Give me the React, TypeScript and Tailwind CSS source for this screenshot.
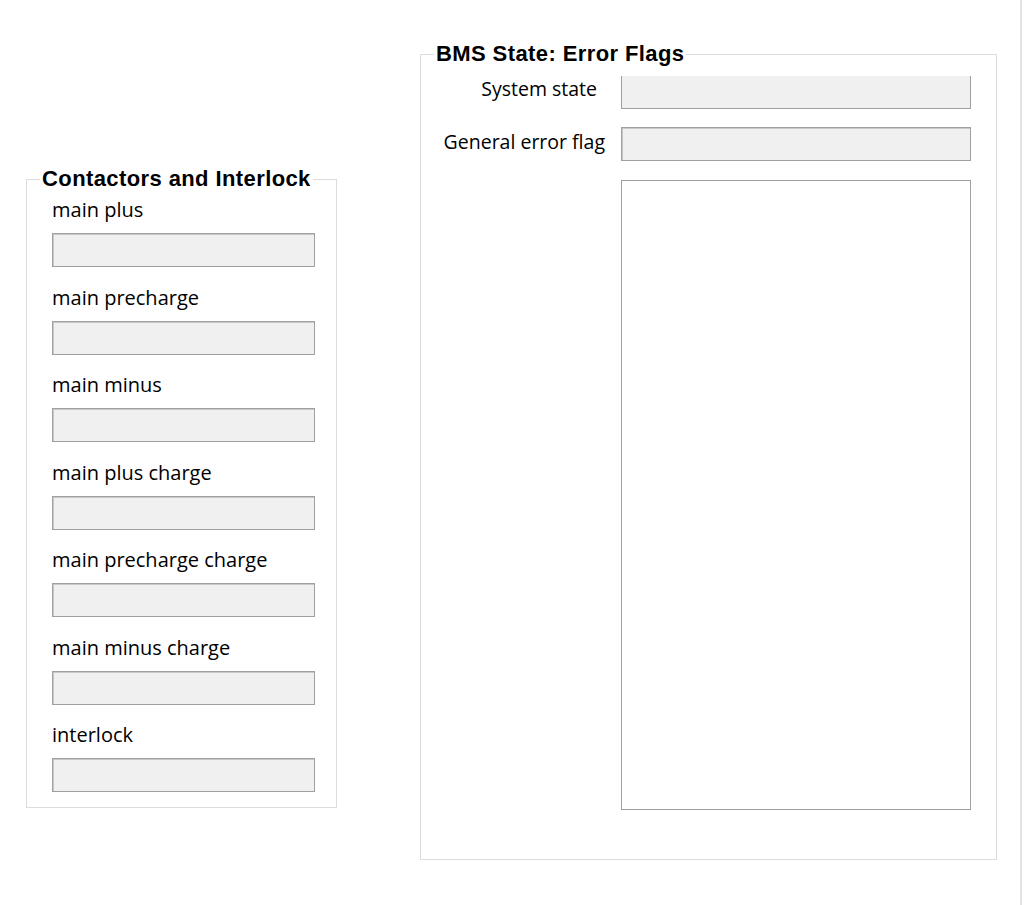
import React from "react";

const CONTACTORS = [
  "main plus",
  "main precharge",
  "main minus",
  "main plus charge",
  "main precharge charge",
  "main minus charge",
  "interlock",
];

const ReadOnlyBox: React.FC<{ className?: string }> = ({ className }) => (
  <div
    className={`border border-[#a0a0a0] bg-[#f0f0f0] shadow-[inset_1px_1px_0_#c8c8c8] ${className ?? ""}`}
  />
);

const Legend: React.FC<{ children: React.ReactNode }> = ({ children }) => (
  <legend className="ml-[13px] px-[2px] font-['Liberation_Sans',sans-serif] text-[22px] font-bold leading-[22px] tracking-[0.4px]">
    {children}
  </legend>
);

const App: React.FC = () => {
  return (
    <div className="flex h-[905px] w-[1024px] bg-white font-['Open_Sans',sans-serif] text-black">
      <div className="flex flex-1 items-start">
        {/* Contactors and Interlock */}
        <fieldset className="ml-[26px] mt-[168px] h-[640px] w-[311px] border border-[#dcdcdc]">
          <Legend>Contactors and Interlock</Legend>
          <div className="mt-[9px] flex flex-col pl-[25px] pr-[21px]">
            {CONTACTORS.map((name) => (
              <div key={name} className="flex h-[87.5px] flex-col">
                <span className="h-[22px] text-[20px] leading-[22px]">{name}</span>
                <ReadOnlyBox className="mt-[12px] h-[34px]" />
              </div>
            ))}
          </div>
        </fieldset>

        {/* BMS State: Error Flags */}
        <fieldset className="ml-[83px] mt-[43px] h-[817px] w-[577px] border border-[#dcdcdc]">
          <Legend>BMS State: Error Flags</Legend>
          <div className="mt-[11px] flex flex-col">
            <div className="flex h-[33px] items-start">
              <span className="w-[200px] pr-[24px] text-right text-[19.5px] leading-[26px]">
                System state
              </span>
              <ReadOnlyBox className="h-[33px] w-[350px] border-t-0 shadow-none" />
            </div>
            <div className="mt-[18px] flex h-[34px] items-start">
              <span className="w-[200px] pr-[16px] pt-[2px] text-right text-[19.5px] leading-[26px]">
                General error flag
              </span>
              <ReadOnlyBox className="h-[34px] w-[350px]" />
            </div>
            <div className="mt-[19px] flex">
              <div className="w-[200px]" />
              <div className="h-[630px] w-[350px] border border-[#a0a0a0] bg-white" />
            </div>
          </div>
        </fieldset>
      </div>
      <div className="mr-[2px] w-[2px] bg-[#e3e3e3]" />
    </div>
  );
};

export default App;
